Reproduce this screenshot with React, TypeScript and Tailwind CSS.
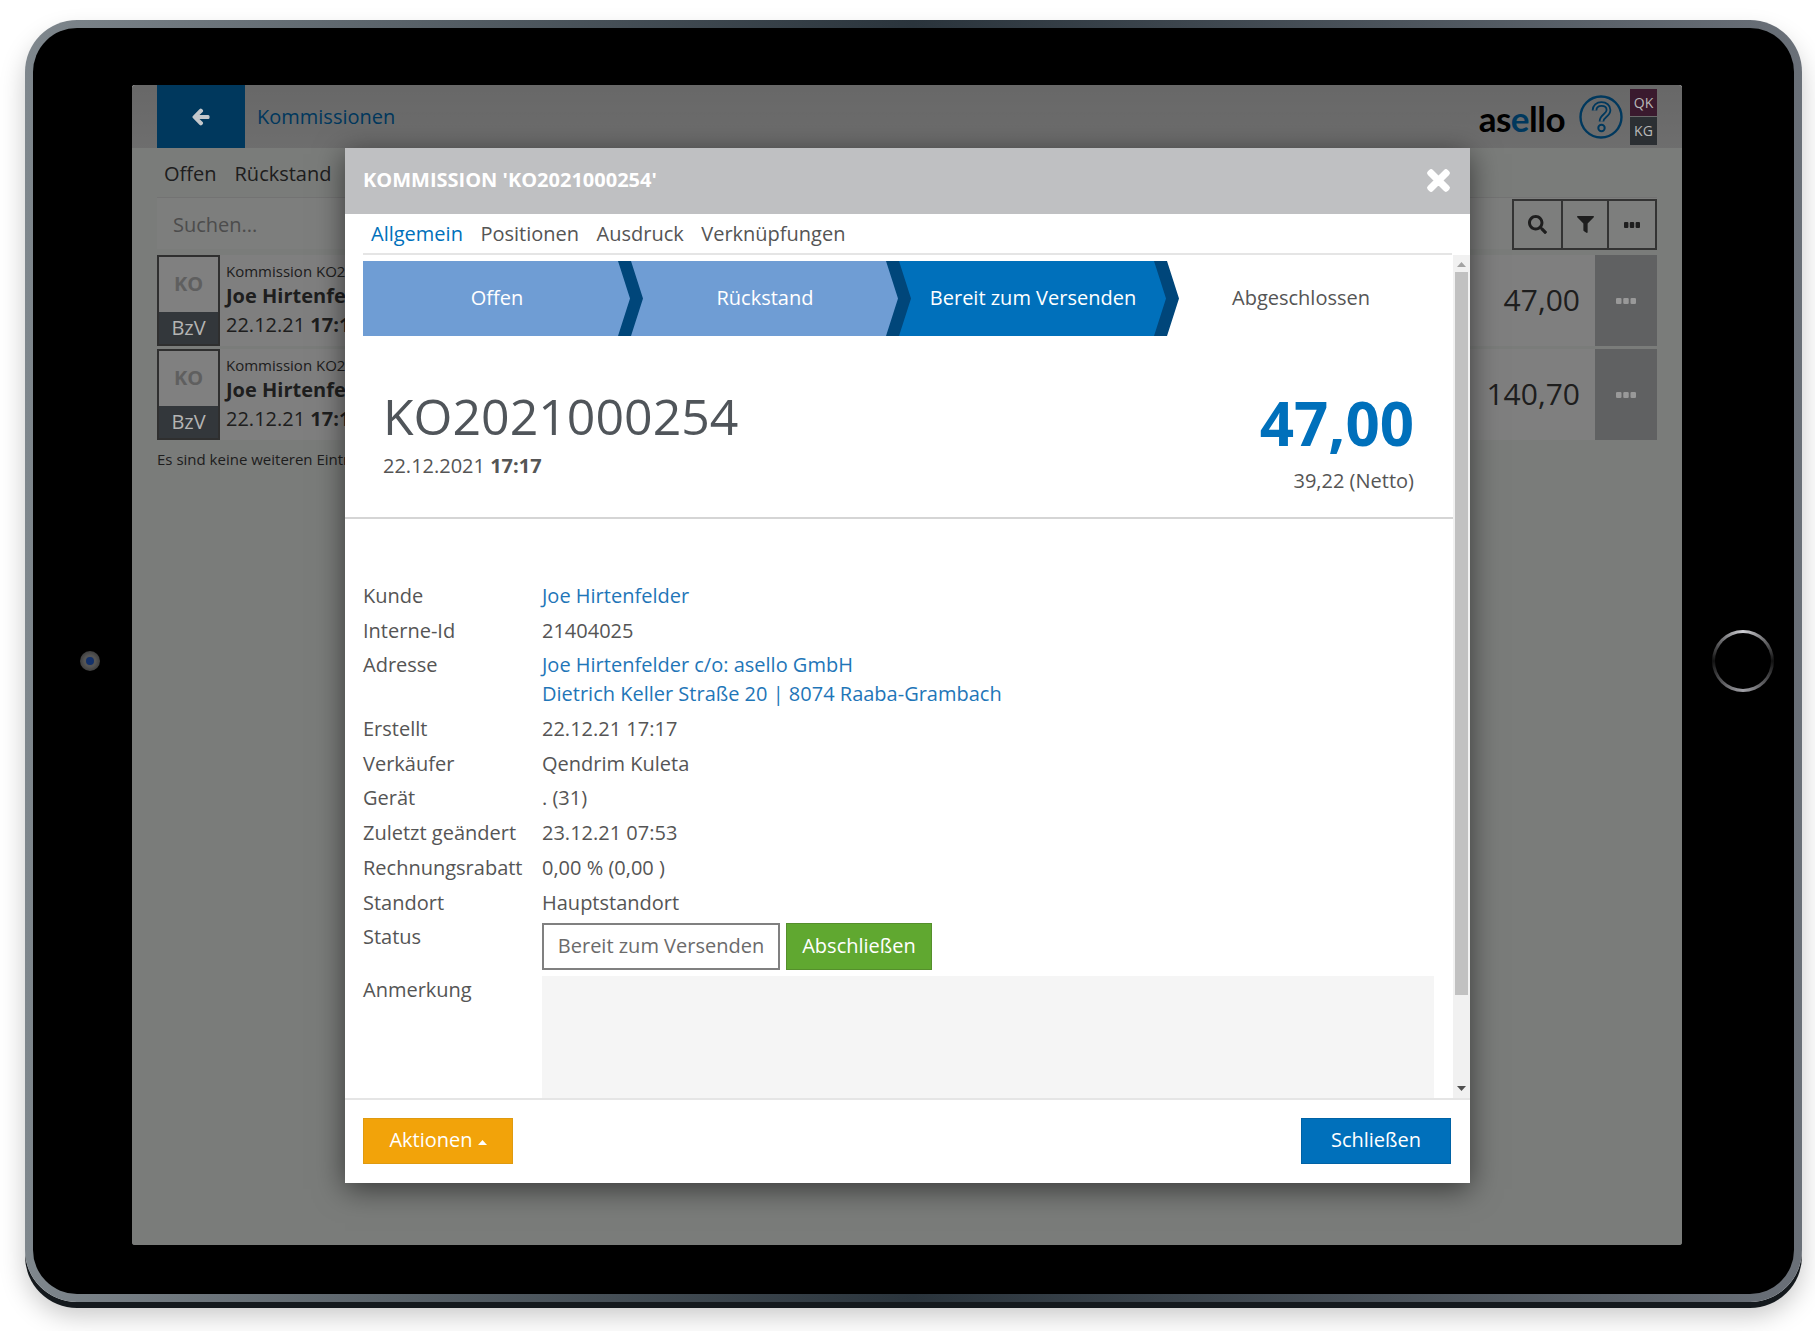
import React from 'react'
import { FaArrowLeft, FaFilter, FaSearch, FaTimes } from 'react-icons/fa'

const orders = [
  { total: '47,00' },
  { total: '140,70' },
]

const steps = [
  { label: 'Offen', bg: 'bg-[#6f9dd4] text-white', arrow: true },
  { label: 'Rückstand', bg: 'bg-[#6f9dd4] text-white', arrow: true },
  { label: 'Bereit zum Versenden', bg: 'bg-[#0070bb] text-white', arrow: true },
  { label: 'Abgeschlossen', bg: 'bg-white text-[#555]', arrow: false },
]

const details = [
  { label: 'Interne-Id', value: '21404025' },
]

const details2 = [
  { label: 'Erstellt', value: '22.12.21 17:17' },
  { label: 'Verkäufer', value: 'Qendrim Kuleta' },
  { label: 'Gerät', value: '. (31)' },
  { label: 'Zuletzt geändert', value: '23.12.21 07:53' },
  { label: 'Rechnungsrabatt', value: '0,00 % (0,00 )' },
  { label: 'Standort', value: 'Hauptstandort' },
]

function Dots({ className, width = 16 }: { className: string; width?: number }) {
  return (
    <svg className={className} width={width} height="6" viewBox="0 0 16 6" preserveAspectRatio="none" fill="currentColor">
      <rect x="0" y="0" width="4.4" height="6" rx="1" />
      <rect x="5.8" y="0" width="4.4" height="6" rx="1" />
      <rect x="11.6" y="0" width="4.4" height="6" rx="1" />
    </svg>
  )
}

function HelpIcon() {
  return (
    <svg width="44" height="44" viewBox="0 0 44 44" fill="none">
      <circle cx="22" cy="22" r="20.5" stroke="#0070bb" strokeWidth="2.4" />
      <path d="M15.5 15.5c0-4 3-6.5 7-6.5s7 2.5 7 6c0 5.5-7 5.5-7 11.5" stroke="#0070bb" strokeWidth="5.6" />
      <path d="M15.5 15.5c0-4 3-6.5 7-6.5s7 2.5 7 6c0 5.5-7 5.5-7 11.5" stroke="#d8d8d8" strokeWidth="2" />
      <circle cx="22.5" cy="33" r="3.2" stroke="#0070bb" strokeWidth="2" />
    </svg>
  )
}

function Row({ label, children }: { label: string; children: React.ReactNode }) {
  return (
    <div className="flex leading-[29px] mb-[5.7px]">
      <div className="w-[179px] shrink-0">{label}</div>
      <div>{children}</div>
    </div>
  )
}

function Modal() {
  return (
    <div className="absolute z-20 left-[213px] top-[63px] w-[1125px] h-[1035px] bg-white flex flex-col shadow-[0_6px_28px_rgba(0,0,0,0.55)] text-[20px] text-[#555]">
      <div className="h-[66px] shrink-0 bg-[#bfc0c2] flex items-center justify-between pl-[18px] pr-[16px] pb-[2px] text-white">
        <div className="text-[20px] font-bold">KOMMISSION 'KO2021000254'</div>
        <FaTimes className="text-[31px] stroke-[24px]" />
      </div>

      <div className="h-[41px] shrink-0 px-[18px]">
        <div className="h-full flex items-center gap-[17.5px] pl-[8px] border-b-2 border-[#e5e5e5]">
          <span className="text-[#0070bb]">Allgemein</span>
          <span>Positionen</span>
          <span>Ausdruck</span>
          <span>Verknüpfungen</span>
        </div>
      </div>

      <div className="flex flex-1 min-h-0">
        <div className="flex-1 min-w-0 overflow-hidden">
          <div className="flex mt-[6px] ml-[18px]">
            {steps.map((step) => (
              <div key={step.label} className={`relative w-[268px] h-[75px] flex items-center justify-center pb-[2px] ${step.bg}`}>
                {step.label}
                {step.arrow && (
                  <svg className="absolute z-10 top-0 -right-[12px]" width="25" height="75" viewBox="0 0 25 75">
                    <polygon points="0,0 13,0 25,37.5 13,75 0,75 12,37.5" fill="#00467a" />
                  </svg>
                )}
              </div>
            ))}
          </div>

          <div className="h-[183px] flex justify-between pl-[38px] pr-[39px] border-b-2 border-[#d5d5d5]">
            <div className="pt-[50px]">
              <div className="text-[50px] leading-[60px] text-[#50555a]">KO2021000254</div>
              <div className="mt-[5px] leading-[29px]">
                22.12.2021 <b>17:17</b>
              </div>
            </div>
            <div className="pt-[45px] text-right">
              <div className="text-[60px] leading-[84px] font-bold text-[#0070bb]">47,00</div>
              <div className="mt-px leading-[29px]">39,22 (Netto)</div>
            </div>
          </div>

          <div className="pt-[62px] pl-[18px] pr-[19px]">
            <Row label="Kunde">
              <span className="text-[#1f76b8]">Joe Hirtenfelder</span>
            </Row>
            {details.map((d) => (
              <Row key={d.label} label={d.label}>{d.value}</Row>
            ))}
            <Row label="Adresse">
              <div className="text-[#1f76b8]">Joe Hirtenfelder c/o: asello GmbH</div>
              <div className="text-[#1f76b8]">Dietrich Keller Straße 20 | 8074 Raaba-Grambach</div>
            </Row>
            {details2.map((d) => (
              <Row key={d.label} label={d.label}>{d.value}</Row>
            ))}
            <div className="flex">
              <div className="w-[179px] shrink-0 leading-[29px]">Status</div>
              <div className="flex gap-[6px] mt-[1px]">
                <div className="w-[238px] h-[47px] border-2 border-[#808080] flex items-center justify-center pb-[2px] text-[#6b6b6b]">
                  Bereit zum Versenden
                </div>
                <div className="w-[146px] h-[47px] pb-[2px] bg-[#60a830] border border-[#558f2c] text-white flex items-center justify-center">
                  Abschließen
                </div>
              </div>
            </div>
            <div className="flex mt-[6px]">
              <div className="w-[179px] shrink-0 leading-[29px] -mt-[1px]">Anmerkung</div>
              <div className="flex-1 h-[140px] bg-[#f5f5f5]" />
            </div>
          </div>
        </div>

        <div className="w-[17px] shrink-0 bg-[#f1f1f1] flex flex-col items-center">
          <svg className="mt-[7px]" width="9" height="5" viewBox="0 0 9 5">
            <polygon points="4.5,0 9,5 0,5" fill="#a3a3a3" />
          </svg>
          <div className="mt-[5px] w-[13px] h-[723px] bg-[#c1c1c1]" />
          <div className="flex-1" />
          <svg className="mb-[7px]" width="9" height="5" viewBox="0 0 9 5">
            <polygon points="0,0 9,0 4.5,5" fill="#505050" />
          </svg>
        </div>
      </div>

      <div className="h-[85px] shrink-0 border-t-2 border-[#e5e5e5] flex items-start justify-between pt-[18px] pl-[18px] pr-[19px] text-white">
        <div className="w-[150px] h-[46px] pb-[2px] bg-[#f2a30a] border border-[#df9a10] flex items-center justify-center gap-[5px]">
          Aktionen
          <svg className="mt-[5px]" width="9" height="5" viewBox="0 0 9 5">
            <polygon points="4.5,0 9,5 0,5" fill="#ffffff" />
          </svg>
        </div>
        <div className="w-[150px] h-[46px] pb-[2px] bg-[#0070bb] border border-[#0062a5] flex items-center justify-center">Schließen</div>
      </div>
    </div>
  )
}

function Screen() {
  return (
    <div className="relative mt-[8px] w-[1550px] h-[1160px] shrink-0 overflow-hidden rounded-[3px] bg-[#f5f8f5] text-[20px] text-[#3c3c3c]">
      <div className="h-[63px] bg-gradient-to-b from-[#d0d0d0] to-[#dcdcdc] flex pl-[25px] pr-[25px]">
        <div className="w-[88px] bg-[#0070bb] flex items-center justify-center">
          <FaArrowLeft className="relative z-10 text-[18px] text-[#c4c8cc] stroke-[40px]" />
        </div>
        <div className="ml-[12px] flex items-center text-[#0070bb]">Kommissionen</div>
        <div className="ml-auto flex items-center">
          <div className="font-['Lato',sans-serif] text-[35px] tracking-[-0.5px] font-bold text-black mr-[14px] mt-[4px]">
            as<span className="text-[#0070bb]">e</span>llo
          </div>
          <HelpIcon />
          <div className="relative z-10 ml-[7px] w-[27px] text-[14px] text-[#b8b8b8] flex flex-col gap-[1px]">
            <div className="h-[27px] bg-[#3a1a2e] flex items-center justify-center">QK</div>
            <div className="h-[28px] bg-[#2b2f33] flex items-center justify-center">KG</div>
          </div>
        </div>
      </div>

      <div className="px-[25px]">
        <div className="h-[50px] flex items-center gap-[18px] pl-[7px] pt-[3px] border-b border-[#e6e6e6]">
          <span>Offen</span>
          <span>Rückstand</span>
        </div>
        <div className="h-[51px] flex justify-between bg-[#ffffff]/50">
          <div className="pl-[16px] pt-[2px] flex items-center text-[#999]">Suchen...</div>
          <div className="mt-[1px] w-[145px] h-[51px] border-2 border-[#666] flex">
            <div className="flex-1 flex items-center justify-center border-r-2 border-[#666]">
              <FaSearch className="text-[19px]" />
            </div>
            <div className="w-[46px] flex items-center justify-center border-r-2 border-[#666]">
              <FaFilter className="text-[17px]" />
            </div>
            <div className="w-[46px] flex items-center justify-center">
              <Dots className="" />
            </div>
          </div>
        </div>

        <div className="mt-[6px] flex flex-col gap-[3px]">
          {orders.map((order) => (
            <div key={order.total} className="h-[91px] bg-white flex">
              <div className="relative z-10 w-[63px] shrink-0 border-2 border-[#2f2f2f] flex flex-col bg-[#808080]">
                <div className="flex-1 flex items-center justify-center pb-[1px] font-bold text-[#5f5f5f]">KO</div>
                <div className="h-[32px] bg-[#33373b] text-[#b4b4b4] flex items-center justify-center">BzV</div>
              </div>
              <div className="pl-[6px] pt-[4px] w-[200px] whitespace-nowrap">
                <div className="text-[15px] leading-[24px]">Kommission KO2021000254</div>
                <div className="font-bold leading-[26px]">Joe Hirtenfelder</div>
                <div className="mt-[1px] leading-[30px]">22.12.21 <b>17:17</b></div>
              </div>
              <div className="flex-1 flex items-center justify-end pr-[15px] pb-[2px] text-[30px]">{order.total}</div>
              <div className="relative z-10 w-[62px] shrink-0 bg-[#606162] flex items-center justify-center">
                <Dots className="text-[#999]" width={20} />
              </div>
            </div>
          ))}
        </div>
        <div className="mt-[8px] text-[15px]">Es sind keine weiteren Einträge</div>
      </div>

      <div className="absolute inset-0 bg-black/50" />
      <Modal />
    </div>
  )
}

export default function App() {
  return (
    <div className="w-[1815px] h-[1331px] bg-white overflow-hidden pt-[20px] pl-[25px] font-['Open_Sans','Noto_Sans',sans-serif]">
      <div className="w-[1777px] h-[1282px] p-[8px] rounded-[52px] bg-gradient-to-r from-[#7f878d] via-[#2a343c] to-[#6a7078] shadow-[0_6px_0_#14191d,0_14px_26px_rgba(0,0,0,0.22)]">
        <div className="h-full rounded-[44px] bg-black flex items-center">
          <div className="ml-[47px] mr-[32px] w-[20px] h-[20px] shrink-0 rounded-full bg-[radial-gradient(circle,#555_40%,#2a2a2a_100%)] flex items-center justify-center">
            <div className="w-[8px] h-[8px] rounded-full bg-[#12306a]" />
          </div>
          <Screen />
          <div className="ml-[30px] w-[62px] h-[62px] shrink-0 rounded-full p-[3px] bg-[conic-gradient(from_0deg,#cfcfd4,#111_25%,#a0a0a6_50%,#111_75%,#cfcfd4)]">
            <div className="w-full h-full rounded-full bg-black" />
          </div>
        </div>
      </div>
    </div>
  )
}
